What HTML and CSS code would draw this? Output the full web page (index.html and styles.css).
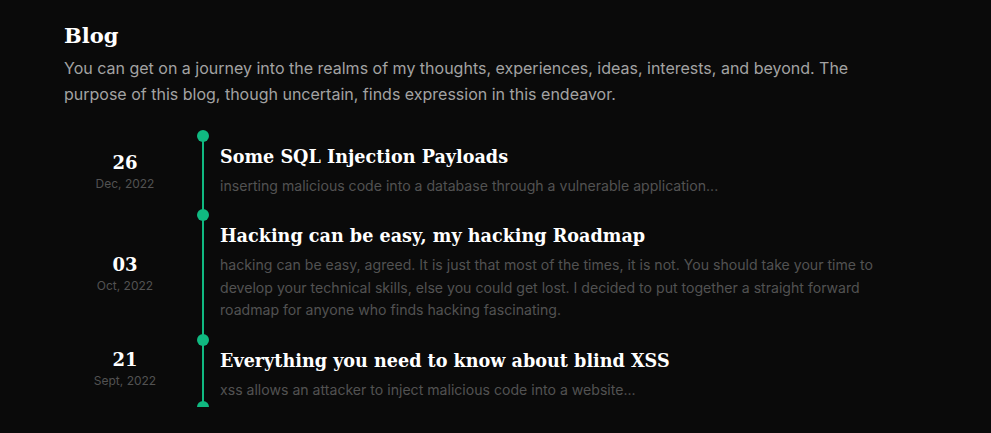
FILE: index.html
```html
<!DOCTYPE html>
<html lang="en">
<head>
<meta charset="utf-8">
<title>Blog</title>
<link rel="stylesheet" href="styles.css">
</head>
<body>
<main class="page">
  <h1 class="page-title">Blog</h1>
  <p class="intro">You can get on a journey into the realms of my thoughts, experiences, ideas, interests, and beyond. The purpose of this blog, though uncertain, finds expression in this endeavor.</p>
  <ol class="timeline">
    <li class="item">
      <div class="date"><span class="day">26</span><span class="month">Dec, 2022</span></div>
      <div class="content">
        <h2 class="post-title">Some SQL Injection Payloads</h2>
        <p class="excerpt">inserting malicious code into a database through a vulnerable application...</p>
      </div>
    </li>
    <li class="item">
      <div class="date"><span class="day">03</span><span class="month">Oct, 2022</span></div>
      <div class="content">
        <h2 class="post-title">Hacking can be easy, my hacking Roadmap</h2>
        <p class="excerpt">hacking can be easy, agreed. It is just that most of the times, it is not. You should take your time to develop your technical skills, else you could get lost. I decided to put together a straight forward roadmap for anyone who finds hacking fascinating.</p>
      </div>
    </li>
    <li class="item last">
      <div class="date"><span class="day">21</span><span class="month">Sept, 2022</span></div>
      <div class="content">
        <h2 class="post-title">Everything you need to know about blind XSS</h2>
        <p class="excerpt">xss allows an attacker to inject malicious code into a website...</p>
      </div>
    </li>
  </ol>
</main>
</body>
</html>
```
FILE: styles.css
```css
* { box-sizing: border-box; }
html, body { margin: 0; padding: 0; background: #0a0a0a; }
body { font-family: Inter, "Noto Sans", sans-serif; color: #a3a3a3; }
.page { padding: 20px 64px 0 64px; width: 960px; }
.page-title {
  margin: 0;
  font-family: "DejaVu Serif", serif;
  font-weight: 700;
  font-size: 21px;
  line-height: 32px;
  color: #ffffff;
}
.intro {
  margin: 3px 0 0 0;
  font-size: 16px;
  line-height: 26px;
  color: #a3a3a3;
  max-width: 830px;
}
.timeline { list-style: none; margin: 29px 0 0 0; padding: 0; }
.item { display: flex; align-items: center; }
.date {
  width: 122px;
  flex: none;
  display: flex;
  flex-direction: column;
  align-items: center;
  margin-right: 16px;
  padding-bottom: 8px;
}
.day {
  font-family: "DejaVu Serif", serif;
  font-weight: 700;
  font-size: 18px;
  line-height: 24px;
  color: #ffffff;
}
.month { font-size: 12px; line-height: 18px; color: #525252; }
.content {
  position: relative;
  align-self: stretch;
  border-left: 2px solid #10b981;
  padding: 7px 0 18px 16px;
  width: 674px;
}
.content::before {
  content: "";
  position: absolute;
  left: -7px;
  top: -6px;
  width: 12px;
  height: 12px;
  border-radius: 50%;
  background: #10b981;
}
.item.last .content { padding-bottom: 6px; }
.item.last .content::after {
  content: "";
  position: absolute;
  left: -7px;
  bottom: -6px;
  width: 12px;
  height: 12px;
  border-radius: 50%;
  background: #10b981;
}
.post-title {
  margin: 0;
  font-family: "DejaVu Serif", serif;
  font-weight: 700;
  font-size: 17.6px;
  line-height: 28px;
  color: #ffffff;
}
.excerpt {
  margin: 4px 0 0 0;
  font-size: 14.1px;
  line-height: 22.4px;
  color: #525252;
}
```
